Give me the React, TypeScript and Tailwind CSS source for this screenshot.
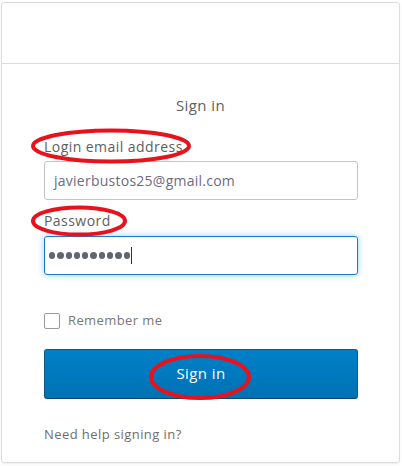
import React from "react";

const font = { fontFamily: '"Open Sans", "Liberation Sans", sans-serif' };

export default function App() {
  return (
    <div className="relative w-[402px] h-[466px] bg-white pt-[2px] px-[1px]" style={font}>
      <div className="h-[461px] w-[399px] border border-[#dcdcdc] rounded-[3px] shadow-[0_1px_2px_rgba(0,0,0,0.08)] flex flex-col">
        <div className="h-[61px] border-b border-[#dcdcdc]" />
        <div className="px-[42px] flex flex-col">
          <h2 className="mt-[31px] text-center text-[15px] leading-[20px] tracking-[0.4px] text-[#5e5e5e]">Sign in</h2>

          <label className="mt-[22px] text-[14px] leading-[20px] tracking-[0.45px] text-[#5e5e5e]">Login email address</label>
          <div className="mt-[4px] h-[39px] w-[314px] border border-[#c4c4c4] rounded-[3px] flex items-center px-[9px] text-[14px] tracking-[0.25px] text-[#6f6a80]">
            javierbustos25@gmail.com
          </div>

          <label className="mt-[11px] text-[14px] leading-[20px] tracking-[0.45px] text-[#5e5e5e]">Password</label>
          <div className="mt-[5px] h-[39px] w-[314px] border border-[#1c7bbd] rounded-[3px] shadow-[0_0_6px_rgba(80,190,240,0.7)] flex items-center pl-[4px]">
            <div className="flex gap-[2px]">
              {[...Array(10)].map((_, i) => (
                <span key={i} className="w-[6.3px] h-[6.3px] rounded-full bg-[#5f6572]" />
              ))}
            </div>
            <span className="ml-[1px] w-[1px] h-[17px] bg-[#333]" />
          </div>

          <div className="mt-[36px] flex items-center gap-[8px]">
            <span className="w-[16px] h-[16px] border border-[#9a9a9a] rounded-[2px]" />
            <span className="text-[13px] tracking-[0.4px] text-[#777]">Remember me</span>
          </div>

          <button className="mt-[18px] h-[50px] w-[314px] rounded-[3px] border border-[#0b5a8a] border-b-[#064a73] bg-gradient-to-b from-[#0080c8] to-[#0072b4] text-white text-[15px] tracking-[0.4px]">
            Sign in
          </button>

          <a className="mt-[26px] text-[13px] tracking-[0.43px] text-[#6e6e6e]">Need help signing in?</a>
        </div>
      </div>

      <svg className="absolute inset-0 pointer-events-none" width="402" height="466">
        <g fill="none" stroke="#e8121c" strokeWidth="4">
          <ellipse cx="111" cy="146" rx="78" ry="15.5" />
          <ellipse cx="79" cy="221" rx="46" ry="13.5" />
          <ellipse cx="200" cy="377" rx="49" ry="21" />
        </g>
      </svg>
    </div>
  );
}
